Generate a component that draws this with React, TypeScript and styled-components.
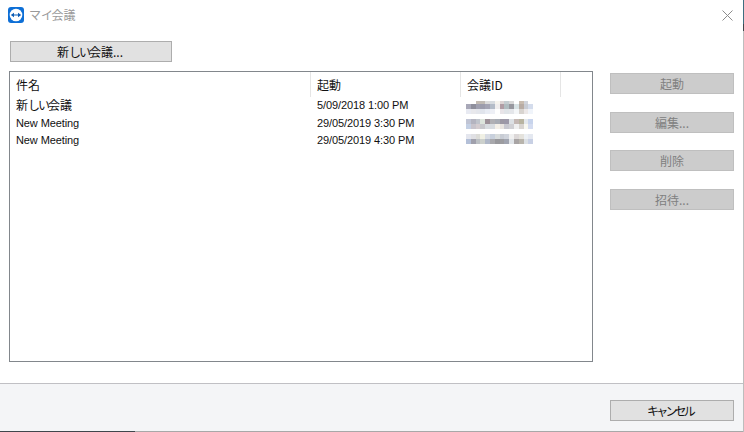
import React from "react";
import styled, { createGlobalStyle } from "styled-components";

const GlobalStyle = createGlobalStyle`
  html, body {
    margin: 0;
    padding: 0;
    background: #fff;
  }
  body {
    font-family: "Noto Sans CJK JP", "Liberation Sans", sans-serif;
    overflow: hidden;
  }
`;

const mosaics = [
  {
    top: 101,
    lines: [
      { h: 3, cells: ["#fff", "#fff", "#c4bcb4", "#c0bab4", "#dcdcdc", "#d8dce0", "#f6f4ee", "#dcd4d4", "#c4ccd0", "#d8d8d8", "#fff", "#c8bcb0", "#d0d4dc", "#fff"] },
      { h: 5, cells: ["#a8a8b8", "#8f8f9c", "#a0a0b0", "#9c9cac", "#a4a4b4", "#b4bcc8", "#f0eeee", "#b09ca4", "#b0bcc0", "#98989f", "#d8e2e4", "#b8aca4", "#c8ccd4", "#d4dcec"] },
      { h: 5, cells: ["#e8eaf2", "#e8e8ec", "#e4e6ec", "#e0e4ec", "#e8ecf4", "#eef0f6", "#fff", "#e8e4e8", "#e0e4e8", "#e4e6ea", "#f4f6f8", "#d8d4d0", "#ece8e8", "#f0f4fa"] },
    ],
  },
  {
    top: 119,
    lines: [
      { h: 5, cells: ["#c0c4d4", "#b4b4c0", "#c0c4cc", "#dce4dc", "#9c9098", "#b0b0b4", "#a8acb4", "#9c98a4", "#9c98a8", "#dce0e4", "#c4b8b4", "#b8b4a0", "#e4e8ec", "#c8d4ec"] },
      { h: 5, cells: ["#c4d0e4", "#c8c4cc", "#d4ccd0", "#c8c8cc", "#d8dce0", "#d8dce0", "#f4f0e8", "#e8e4e0", "#c8c8d0", "#d0d0d4", "#f0f0f0", "#d8d4d0", "#f8f8f0", "#d4dcf0"] },
    ],
  },
  {
    top: 134,
    lines: [
      { h: 5, cells: ["#e4e6ee", "#e0e0e4", "#dcdcd8", "#f0f0e4", "#d8dce4", "#c8d0dc", "#d8dcdc", "#c8ccd4", "#d0d4dc", "#f0f0f0", "#dcd8d8", "#e4e2dc", "#ecf0f4", "#e4e8f0"] },
      { h: 5, cells: ["#b4c0d8", "#a0a0ac", "#bcc0c4", "#ccd0cc", "#b0b8c8", "#a8a8ac", "#98989c", "#9c9ca0", "#a0a4b0", "#e0e4e8", "#a8a4a4", "#b8b4ac", "#dce0e4", "#c8d0e4"] },
    ],
  },
];

const meetings = [
  { start: "5/09/2018 1:00 PM", mosaic: 0 },
  { start: "29/05/2019 3:30 PM", mosaic: 1 },
  { start: "29/05/2019 4:30 PM", mosaic: 2 },
];

const App = () => {
  return (
    <>
      <GlobalStyle />
      <Window>
        <Dialog>
          <TitleBar>
            <LogoIcon viewBox="0 0 16 16">
              <rect width="16" height="16" rx="3" fill="#0e6fd6" />
              <circle cx="8" cy="8" r="6.3" fill="#fff" />
              <path d="M2.8 8 6 5.8v1.6h4V5.8L13.2 8 10 10.2V8.6H6v1.6z" fill="#0b5cb5" />
            </LogoIcon>
            <Title>
              マ<Kana $squeeze={-1.5}>イ</Kana>会議
            </Title>
            <CloseIcon viewBox="0 0 11 11">
              <path d="M.5.5l10 10M10.5.5l-10 10" stroke="#8c8c8c" strokeWidth="1" fill="none" />
            </CloseIcon>
          </TitleBar>
          <Body>
            <MainColumn>
              <NewButton type="button">
                新<Kana $squeeze={-2}>しい</Kana>会議...
              </NewButton>
              <ListBox>
                <HeaderRow>
                  <HeaderCell $width={301}>件名</HeaderCell>
                  <HeaderCell $width={150}>起動</HeaderCell>
                  <HeaderCell $width={100}>会議ID</HeaderCell>
                </HeaderRow>
                {meetings.map((m, i) => (
                  <Row key={i}>
                    <NameCell>
                      {i === 0 ? (
                        <>
                          新<Kana $squeeze={-2}>しい</Kana>会議
                        </>
                      ) : (
                        <LatinText>New Meeting</LatinText>
                      )}
                    </NameCell>
                    <StartCell>
                      <LatinText>{m.start}</LatinText>
                    </StartCell>
                  </Row>
                ))}
                {/* blurred meeting ids lie over the rows */}
                {mosaics.map((block, b) => (
                  <Mosaic key={b} style={{ top: block.top - 72 }}>
                    {block.lines.map((line, y) => (
                      <MosaicLine key={y}>
                        {line.cells.map((c, x) => (
                          <MosaicCell key={x} $color={c} $height={line.h} />
                        ))}
                      </MosaicLine>
                    ))}
                  </Mosaic>
                ))}
              </ListBox>
            </MainColumn>
            <SideColumn>
              <DisabledButton type="button" disabled>起動</DisabledButton>
              <DisabledButton type="button" disabled>編集...</DisabledButton>
              <DisabledButton type="button" disabled>削除</DisabledButton>
              <DisabledButton type="button" disabled>招待...</DisabledButton>
            </SideColumn>
          </Body>
          <Footer>
            <CancelButton type="button">
              <Kana $squeeze={-2.8}>キャンセル</Kana>
            </CancelButton>
          </Footer>
          <BottomEdge>
            <BottomDark />
          </BottomEdge>
        </Dialog>
        <RightEdge />
      </Window>
    </>
  );
};

export default App;

const Window = styled.div`
  width: 744px;
  height: 432px;
  display: flex;
  background: #fff;
  overflow: hidden;
`;

const Dialog = styled.div`
  width: 743px;
  flex: none;
  display: flex;
  flex-direction: column;
`;

const RightEdge = styled.div`
  width: 1px;
  flex: none;
  background: linear-gradient(
    to bottom,
    #3f6f80 0,
    #3f6f80 24px,
    #40464c 24px,
    #40464c 31px,
    #bdbdbd 31px,
    #bdbdbd 100%
  );
`;

const TitleBar = styled.div`
  height: 30px;
  flex: none;
  display: flex;
  align-items: center;
  padding: 0 10px 0 8px;
`;

const LogoIcon = styled.svg`
  width: 16px;
  height: 16px;
  flex: none;
`;

const Title = styled.span`
  margin-left: 5px;
  font-size: 12px;
  line-height: 16px;
  color: #9a9a9a;
`;

const Kana = styled.span<{ $squeeze: number }>`
  letter-spacing: ${({ $squeeze }) => $squeeze}px;
`;

const LatinText = styled.span`
  display: block;
  font-family: "Liberation Sans", sans-serif;
  font-size: 11px;
  line-height: 14px;
  letter-spacing: -0.1px;
`;

const CloseIcon = styled.svg`
  width: 11px;
  height: 11px;
  margin-left: auto;
  flex: none;
`;

const Body = styled.div`
  height: 353px;
  flex: none;
  display: flex;
  padding: 11px 9px 0 9px;
  box-sizing: border-box;
`;

const MainColumn = styled.div`
  width: 584px;
  flex: none;
  display: flex;
  flex-direction: column;
  align-items: flex-start;
`;

const GreyButton = styled.button`
  height: 21px;
  padding: 0;
  box-sizing: border-box;
  border: 1px solid #adadad;
  border-radius: 0;
  background: #e1e1e1;
  color: #111;
  font-family: inherit;
  font-size: 12px;
  line-height: 19px;
  text-align: center;
`;

const NewButton = styled(GreyButton)`
  width: 162px;
  margin-left: 1px;
  padding-right: 2px;
`;

const ListBox = styled.div`
  position: relative;
  width: 584px;
  height: 291px;
  margin-top: 9px;
  box-sizing: border-box;
  border: 1px solid #82878c;
  background: #fff;
`;

const HeaderRow = styled.div`
  display: flex;
  height: 24.5px;
`;

const HeaderCell = styled.div<{ $width: number }>`
  width: ${({ $width }) => $width}px;
  box-sizing: border-box;
  padding-left: 6px;
  border-right: 1px solid #e5e5e5;
  font-size: 12px;
  line-height: 25px;
  color: #111;
`;

const Row = styled.div`
  display: flex;
  height: 17.5px;
  align-items: center;
  font-size: 12px;
  line-height: 14px;
  color: #111;
`;

const NameCell = styled.div`
  width: 301px;
  padding-left: 6px;
  box-sizing: border-box;
`;

const StartCell = styled.div`
  width: 149px;
  padding-left: 6px;
  box-sizing: border-box;
`;

const Mosaic = styled.div`
  position: absolute;
  left: 456px;
  display: flex;
  flex-direction: column;
`;

const MosaicLine = styled.div`
  display: flex;
`;

const MosaicCell = styled.div<{ $color: string; $height: number }>`
  width: 4.8px;
  height: ${({ $height }) => $height}px;
  background: ${({ $color }) => $color};
`;

const SideColumn = styled.div`
  margin-left: 17px;
  padding-top: 32px;
  display: flex;
  flex-direction: column;
  row-gap: 17.5px;
`;

const DisabledButton = styled(GreyButton)`
  width: 124px;
  border-color: #bfbfbf;
  background: #cccccc;
  color: #808080;
`;

const Footer = styled.div`
  flex: 1;
  display: flex;
  justify-content: flex-end;
  align-items: flex-start;
  padding: 16px 9px 0 0;
  border-top: 1px solid #c0c0c4;
  background: #f4f5f7;
`;

const CancelButton = styled(GreyButton)`
  width: 124px;
  padding-right: 4px;
`;

const BottomEdge = styled.div`
  height: 1px;
  flex: none;
  background: #a8a8a8;
`;

const BottomDark = styled.div`
  width: 135px;
  height: 1px;
  background: #40464c;
`;
